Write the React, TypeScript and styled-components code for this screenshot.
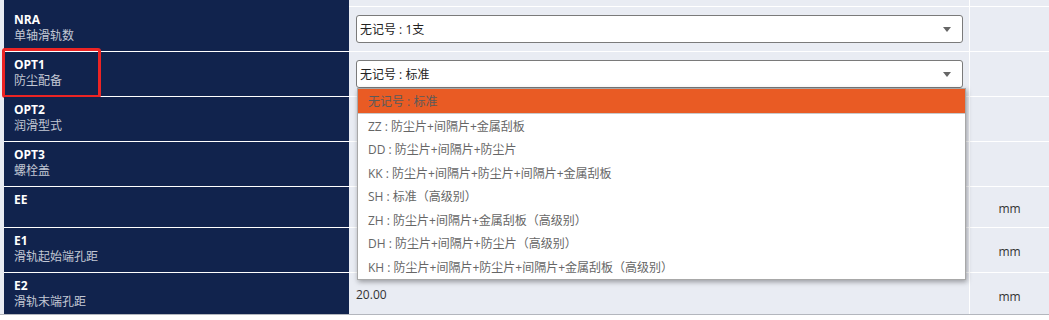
import React from "react";
import styled, { createGlobalStyle } from "styled-components";

const GlobalStyle = createGlobalStyle`
  body {
    margin: 0;
    background: #ffffff;
    font-family: "Open Sans", "Noto Sans CJK SC", sans-serif;
  }
`;

const Sheet = styled.div`
  background: #e9ecf3;
  padding-left: 4px;
  border-bottom: 1px solid #b3b6bd;
  box-shadow: 0 1px 3px rgba(0, 0, 0, 0.18);
`;

const Row = styled.div<{ $h: number; $last?: boolean }>`
  display: grid;
  grid-template-columns: 345px 620px 1fr;
  height: ${(p) => p.$h}px;
  box-sizing: border-box;
  border-bottom: ${(p) => (p.$last ? "none" : "1px solid #ffffff")};
`;

const Label = styled.div`
  position: relative;
  background: #11234d;
  padding: 5px 10px 0;
`;

const Title = styled.div`
  font-size: 12px;
  line-height: 16px;
  font-weight: 700;
  color: #ffffff;
`;

const Sub = styled.div`
  font-size: 12px;
  line-height: 16px;
  color: #c3c8d4;
`;

const Highlight = styled.div`
  position: absolute;
  left: -2px;
  top: -4px;
  width: 99px;
  height: 50px;
  box-sizing: border-box;
  border: 3px solid #ec2424;
  border-radius: 3px;
`;

const Value = styled.div<{ $top?: number }>`
  position: relative;
  padding: ${(p) => p.$top ?? 8}px 6px 0 7px;
  font-size: 12px;
  color: #333333;
`;

const PlainValue = styled.div`
  line-height: 16px;
  font-size: 12px;
  color: #333;
`;

const SelectWrap = styled.div`
  position: relative;
`;

const SelectBox = styled.div`
  display: flex;
  align-items: center;
  justify-content: space-between;
  height: 28px;
  box-sizing: border-box;
  padding: 0 11px 0 3px;
  background: #ffffff;
  border: 1px solid #7a7a7a;
  border-radius: 3px;
  font-size: 12px;
  color: #222222;
`;

const Arrow = styled.span`
  width: 0;
  height: 0;
  border-left: 4px solid transparent;
  border-right: 4px solid transparent;
  border-top: 5px solid #666666;
  margin-top: 1px;
`;

const List = styled.div`
  position: absolute;
  top: 100%;
  left: 1px;
  right: -3px;
  z-index: 10;
  background: #ffffff;
  border: 1px solid #a8a8a8;
  box-shadow: 1px 2px 5px rgba(0, 0, 0, 0.35);
`;

const Option = styled.div<{ $active?: boolean }>`
  height: ${(p) => (p.$active ? "25px" : "23.5px")};
  display: flex;
  align-items: center;
  padding-left: 10px;
  font-size: 12px;
  color: ${(p) => (p.$active ? "#5a5a5a" : "#666666")};
  background: ${(p) => (p.$active ? "#e95b24" : "#ffffff")};
  border-bottom: ${(p) => (p.$active ? "1px solid #c9c9c9" : "none")};
  box-sizing: border-box;
`;

const Unit = styled.div<{ $off?: number }>`
  display: flex;
  align-items: center;
  justify-content: center;
  padding-top: ${(p) => p.$off ?? 3}px;
  border-left: 1px solid #ffffff;
  font-size: 12px;
  color: #333333;
`;

const options = [
  "无记号 : 标准",
  "ZZ : 防尘片+间隔片+金属刮板",
  "DD : 防尘片+间隔片+防尘片",
  "KK : 防尘片+间隔片+防尘片+间隔片+金属刮板",
  "SH : 标准（高级别）",
  "ZH : 防尘片+间隔片+金属刮板（高级别）",
  "DH : 防尘片+间隔片+防尘片（高级别）",
  "KH : 防尘片+间隔片+防尘片+间隔片+金属刮板（高级别）",
];

const Select: React.FC<{ value: string; open?: boolean }> = ({ value, open }) => (
  <SelectWrap>
    <SelectBox>
      <span>{value}</span>
      <Arrow />
    </SelectBox>
    {open && (
      <List>
        {options.map((o, i) => (
          <Option key={i} $active={i === 0}>
            {o}
          </Option>
        ))}
      </List>
    )}
  </SelectWrap>
);

const App: React.FC = () => {
  return (
    <>
      <GlobalStyle />
      <Sheet>
        <Row $h={7}>
          <Label />
          <Value />
          <Unit />
        </Row>
        <Row $h={45}>
          <Label>
            <Title>NRA</Title>
            <Sub>单轴滑轨数</Sub>
          </Label>
          <Value>
            <Select value="无记号 : 1支" />
          </Value>
          <Unit />
        </Row>
        <Row $h={45}>
          <Label>
            <Title>OPT1</Title>
            <Sub>防尘配备</Sub>
            <Highlight />
          </Label>
          <Value>
            <Select value="无记号 : 标准" open />
          </Value>
          <Unit />
        </Row>
        <Row $h={45}>
          <Label>
            <Title>OPT2</Title>
            <Sub>润滑型式</Sub>
          </Label>
          <Value />
          <Unit />
        </Row>
        <Row $h={45}>
          <Label>
            <Title>OPT3</Title>
            <Sub>螺栓盖</Sub>
          </Label>
          <Value />
          <Unit />
        </Row>
        <Row $h={41}>
          <Label>
            <Title>EE</Title>
          </Label>
          <Value />
          <Unit>mm</Unit>
        </Row>
        <Row $h={45}>
          <Label>
            <Title>E1</Title>
            <Sub>滑轨起始端孔距</Sub>
          </Label>
          <Value />
          <Unit>mm</Unit>
        </Row>
        <Row $h={41} $last>
          <Label>
            <Title>E2</Title>
            <Sub>滑轨末端孔距</Sub>
          </Label>
          <Value $top={14}>
            <PlainValue>20.00</PlainValue>
          </Value>
          <Unit $off={6}>mm</Unit>
        </Row>
      </Sheet>
    </>
  );
};

export default App;
